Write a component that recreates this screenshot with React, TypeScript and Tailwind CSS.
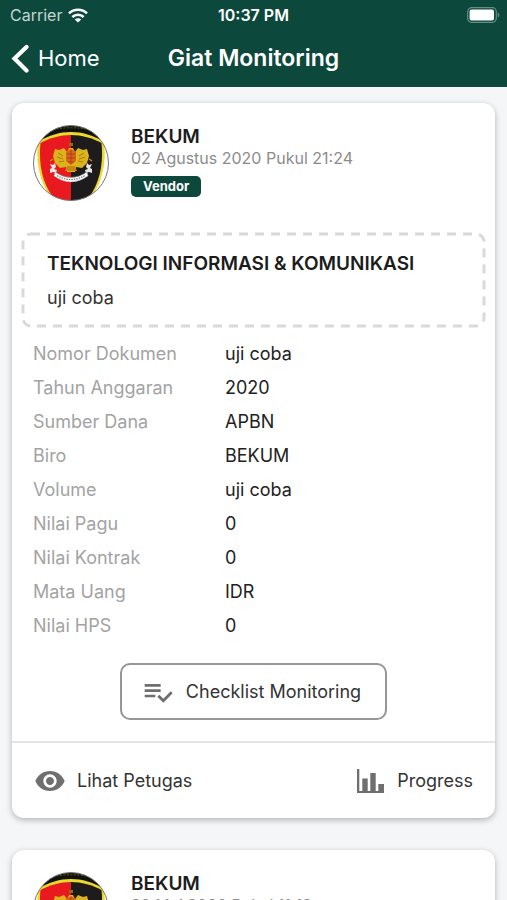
import { useId } from "react";
import { MdVisibility } from "react-icons/md";

type Giat = {
  biro: string;
  tanggal: string;
  status: string;
  judul: string;
  uraian: string;
  detail: [string, string][];
};

const daftarGiat: Giat[] = [
  {
    biro: "BEKUM",
    tanggal: "02 Agustus 2020 Pukul 21:24",
    status: "Vendor",
    judul: "TEKNOLOGI INFORMASI & KOMUNIKASI",
    uraian: "uji coba",
    detail: [
      ["Nomor Dokumen", "uji coba"],
      ["Tahun Anggaran", "2020"],
      ["Sumber Dana", "APBN"],
      ["Biro", "BEKUM"],
      ["Volume", "uji coba"],
      ["Nilai Pagu", "0"],
      ["Nilai Kontrak", "0"],
      ["Mata Uang", "IDR"],
      ["Nilai HPS", "0"],
    ],
  },
];

const WifiIcon = () => (
  <svg viewBox="0 0 20 15" className="h-[15px] w-5" aria-hidden="true">
    <g fill="none" stroke="white" strokeWidth="2.6">
      <path d="M1 5.4C6 .6 14 .6 19 5.4" />
      <path d="M4.3 9C7.5 6 12.5 6 15.7 9" />
    </g>
    <path d="M6.8 11.4c1.9-1.6 4.5-1.6 6.4 0L10 14.6z" fill="white" />
  </svg>
);

const BatteryIcon = () => (
  <svg viewBox="0 0 33 16" className="h-4 w-[33px]" aria-hidden="true">
    <rect x="0.7" y="0.7" width="28.6" height="14.6" rx="4" fill="none" stroke="#668f84" strokeWidth="1.2" />
    <rect x="2.6" y="2.6" width="24.4" height="10.8" rx="2" fill="white" />
    <path d="M30.8 5.5c2 .8 2 4.2 0 5z" fill="#668f84" />
  </svg>
);

const BackIcon = () => (
  <svg viewBox="0 0 18 30" className="h-[30px] w-[18px]" aria-hidden="true">
    <path d="M15.500 3 3.500 14.500l12 12" fill="none" stroke="white" strokeWidth="4.200" strokeLinecap="round" />
  </svg>
);

const ChecklistIcon = () => (
  <svg viewBox="0 0 24 24" className="size-8 fill-[#6f6f6f]" aria-hidden="true">
    <path d="M14 10H2v2h12v-2zm0-4H2v2h12V6zM2 16h8v-2H2v2zm19.500-4.500L23 13l-6.990 7-4.510-4.500L13 14l3.010 3 5.490-5.500z" />
  </svg>
);

const ChartIcon = () => (
  <svg viewBox="0 0 28 24" className="h-6 w-7 fill-[#6f6f6f]" aria-hidden="true">
    <path d="M0 0h2.300v22h3V9.500h5.400V22h2.600V4h5.400v18h2.600v-7H27v9H0z" />
  </svg>
);

// 로고
const Emblem = () => {
  const id = useId();

  return (
    <svg viewBox="0 0 76 76" className="size-[76px] shrink-0" role="img" aria-label="Logo">
      <clipPath id={id}>
        <circle cx="38" cy="38" r="37.5" />
      </clipPath>
      <g clipPath={`url(#${id})`}>
        <rect width="76" height="76" fill="white" />
        <path d="M4 17C18 11 28 8 38 8s20 3 34 9V0H4z" fill="#12120d" />
        <path d="M20 4.500Q38 1 56 4.500" fill="none" stroke="#5f5c1c" strokeWidth="1" strokeDasharray="2 1.500" />
        <path d="M5 17C16 10 27 7 38 7s22 3 33 10c3 25-4 48-18 60H23C9 65 2 42 5 17z" fill="#ecd92a" />
        <path d="M7.500 18c9-5 20-8 30.500-8v67H25C11 65 5 42 7.500 18z" fill="#e8191f" />
        <path d="M68.500 18c-9-5-20-8-30.500-8v67h13c14-12 20-35 17.500-59z" fill="#1d1b1c" />
        {/* 가루다 */}
        <path d="M36 18h4v3h-4z" fill="#9a6a15" />
        <path d="M22 24l4 1 5-2 3 4 2-4h4l2 4 3-4 5 2 4-1 2 7-2 7-5 5-6-1-1 5h-8l-1-5-6 1-5-5-2-7z" fill="#dcb31a" />
        <path d="M25 28l5 3M24 32l6 2M26 37l5-1M51 28l-5 3M52 32l-6 2M50 37l-5-1" stroke="#a87d12" strokeWidth="1" />
        <path d="M33 27l5-3 5 3v9l-5 4-5-4z" fill="#d8641c" />
        <path d="M34 29h8M34 33h8M35 37h6M38 25v14" stroke="#b3400f" strokeWidth="1" />
        <path d="M34 41h8l2 5H32z" fill="#c98512" />
        <path d="M17 36l3-2M59 36l-3-2" stroke="#c78a1b" strokeWidth="1.500" />
        {/* 띠 */}
        <path d="M17 39l3 1 2-2 1 4-2 2 3 1-1 3-3-1-3 1v-4l2-1zM59 39l-3 1-2-2-1 4 2 2-3 1 1 3 3-1 3 1v-4l-2-1z" fill="#e7e7e7" />
        <path d="M22 47q16 11 32 0l1 4q-17 12-34 0z" fill="white" stroke="#999" strokeWidth="0.500" />
        <path d="M24 50.500q14 8 28 0" fill="none" stroke="#777" strokeWidth="1.200" strokeDasharray="1.500 1" />
      </g>
      <circle cx="38" cy="38" r="37.500" fill="none" stroke="#777" strokeWidth="1" />
    </svg>
  );
};

const CardHeader = ({ biro, tanggal, status }: { biro: string; tanggal: string; status: string }) => (
  <div className="flex gap-[22px] px-[21px] pt-[22px]">
    <Emblem />
    <div className="flex flex-col items-start pt-px">
      <h2 className="text-[19px] leading-[22px] font-semibold text-[#1c1c1c]">{biro}</h2>
      <p className="text-base leading-5 text-[#8c8c8c]">{tanggal}</p>
      <span className="mt-2 rounded-[5px] bg-[#0c493c] px-3 text-[13px] leading-[21px] font-bold text-white">
        {status}
      </span>
    </div>
  </div>
);

const GiatCard = ({ giat }: { giat: Giat }) => (
  <article className="rounded-xl bg-white shadow-[0_2px_6px_rgba(0,0,0,0.28)]">
    <CardHeader biro={giat.biro} tanggal={giat.tanggal} status={giat.status} />

    <section className="relative mx-[10px] mt-8 px-[25px] pt-[19px] pb-[17px]">
      {/* 점선 테두리 */}
      <svg className="absolute inset-0 size-full overflow-visible p-px" aria-hidden="true">
        <rect width="100%" height="100%" rx="8" fill="none" stroke="#d9d9d9" strokeWidth="3" strokeDasharray="9 7" />
      </svg>
      <h3 className="text-[19px] leading-6 font-semibold text-[#1c1c1c]">{giat.judul}</h3>
      <p className="mt-[10px] text-lg leading-6 text-[#333]">{giat.uraian}</p>
    </section>

    <dl className="mx-[21px] mt-[15px] flex flex-col gap-[10px] text-lg leading-6">
      {giat.detail.map(([label, value]) => (
        <div key={label} className="grid grid-cols-[192px_1fr]">
          <dt className="text-[#a3a3a3]">{label}</dt>
          <dd className="text-[#222]">{value}</dd>
        </div>
      ))}
    </dl>

    <div className="flex justify-center pt-[25px] pb-[21px]">
      <button
        type="button"
        className="flex h-[57px] items-center gap-3 rounded-[10px] border-2 border-[#969696] pr-6 pl-5 text-lg text-[#333]"
      >
        <ChecklistIcon />
        Checklist Monitoring
      </button>
    </div>

    <div className="flex justify-between border-t-2 border-[#e2e4e6] px-[22px] pt-[22px] pb-[21px] text-lg text-[#333]">
      <button type="button" className="flex h-8 items-center gap-[11px]">
        <MdVisibility className="size-8 text-[#6f6f6f]" />
        Lihat Petugas
      </button>
      <button type="button" className="flex h-8 items-center gap-3">
        <ChartIcon />
        Progress
      </button>
    </div>
  </article>
);

const App = () => {
  return (
    <div className="h-screen overflow-hidden bg-[#f4f6f8] font-['Inter','Liberation_Sans',sans-serif]">
      <header className="bg-[#0c493c] text-white">
        <div className="grid h-[30px] grid-cols-3 items-center px-[7px] text-base">
          <span className="flex items-center gap-[6px] pl-[3px] text-[#c5d5d0]">
            Carrier <WifiIcon />
          </span>
          <span className="text-center font-semibold">10:37 PM</span>
          <span className="flex justify-end">
            <BatteryIcon />
          </span>
        </div>
        <div className="grid h-[57px] grid-cols-[1fr_auto_1fr] items-center px-[11px]">
          <button type="button" className="flex items-center gap-[9px] text-[22px]">
            <BackIcon />
            Home
          </button>
          <h1 className="text-[23px] font-semibold">Giat Monitoring</h1>
        </div>
      </header>

      <main className="flex flex-col gap-8 px-3 pt-4">
        {daftarGiat.map((giat) => (
          <GiatCard key={giat.tanggal} giat={giat} />
        ))}
        <article className="rounded-xl bg-white pb-8 shadow-[0_2px_6px_rgba(0,0,0,0.28)]">
          <CardHeader biro="BEKUM" tanggal="29 Mei 2020 Pukul 11:12" status="Vendor" />
        </article>
      </main>
    </div>
  );
};

export default App;
